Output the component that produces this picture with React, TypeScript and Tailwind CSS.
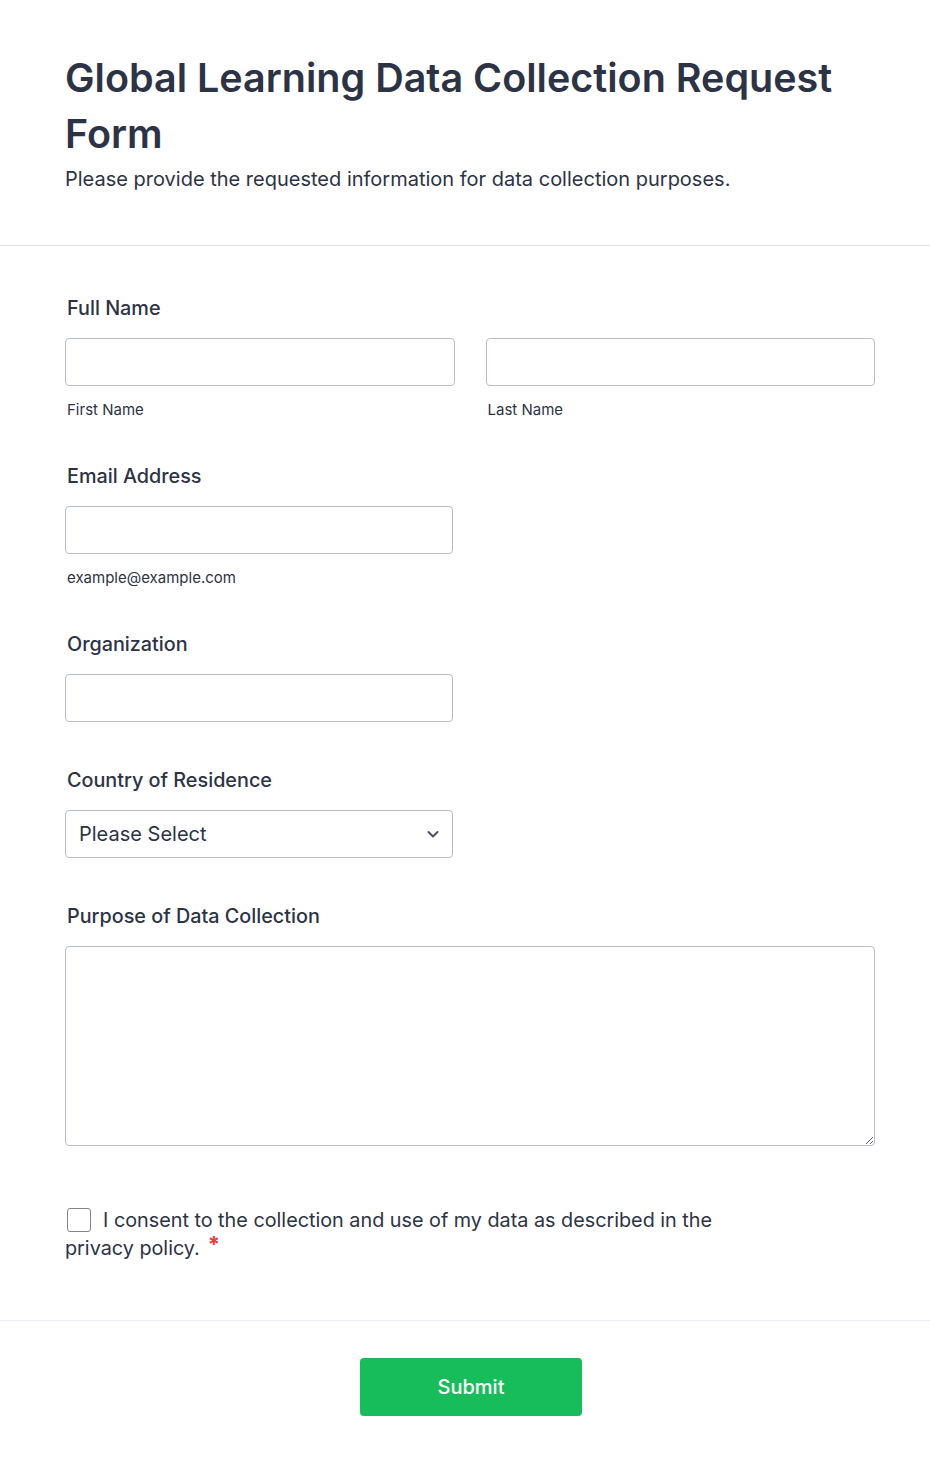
import React from "react";

function Label({ children }: { children: React.ReactNode }) {
  return (
    <div className="ml-[2px] text-[19.8px] font-medium leading-[30px] text-[#2c3345]">{children}</div>
  );
}

function Sub({ children }: { children: React.ReactNode }) {
  return <div className="ml-[2px] mt-[13px] text-[15px] leading-[22px] text-[#2c3345]">{children}</div>;
}

const inputCls =
  "block h-[48px] w-full rounded-[4px] border border-[#b8bdc9] bg-white outline-none";

export default function App() {
  return (
    <div className="min-h-[1467px] bg-white text-[#2c3345]" style={{ fontFamily: "Inter, 'Noto Sans', sans-serif" }}>
      <header className="border-b border-[#dcdee8] pl-[65px] pr-[55px] pb-[51px] pt-[50px]">
        <h1 className="text-[39.5px] font-semibold leading-[56px] text-[#2c3345]">
          Global Learning Data Collection Request Form
        </h1>
        <p className="mt-[2px] text-[20px] leading-[30px] text-[#2c3345]">
          Please provide the requested information for data collection purposes.
        </p>
      </header>

      <main className="pl-[65px] pr-[55px] pb-[58px] pt-[47px]">
        <section>
          <Label>Full Name</Label>
          <div className="mt-[15px] grid grid-cols-2 gap-[31px]">
            <div>
              <input className={inputCls} />
              <Sub>First Name</Sub>
            </div>
            <div>
              <input className={inputCls} />
              <Sub>Last Name</Sub>
            </div>
          </div>
        </section>

        <section className="mt-[40px]">
          <Label>Email Address</Label>
          <div className="mt-[15px] w-[388px]">
            <input className={inputCls} />
          </div>
          <Sub>example@example.com</Sub>
        </section>

        <section className="mt-[40px]">
          <Label>Organization</Label>
          <div className="mt-[15px] w-[388px]">
            <input className={inputCls} />
          </div>
        </section>

        <section className="mt-[43px]">
          <Label>Country of Residence</Label>
          <div className="mt-[15px] flex h-[48px] w-[388px] items-center justify-between rounded-[4px] border border-[#b8bdc9] pl-[13px] pr-[12px]">
            <span className="text-[20px] leading-[30px] text-[#2c3345]">Please Select</span>
            <svg width="14" height="14" viewBox="0 0 14 14" fill="none">
              <path d="M2.5 5 L7 9.5 L11.5 5" stroke="#4a5062" strokeWidth="2" strokeLinecap="round" strokeLinejoin="round" />
            </svg>
          </div>
        </section>

        <section className="mt-[43px]">
          <Label>Purpose of Data Collection</Label>
          <textarea className="mt-[15px] block h-[200px] w-full rounded-[4px] border border-[#b8bdc9] bg-white outline-none" />
        </section>

        <section className="mt-[60px] max-w-[690px] text-[19.8px] leading-[28px] text-[#2c3345]">
          <span className="ml-[2px] mr-[12px] inline-block h-[24px] w-[24px] rounded-[3px] border border-[#858585] bg-white align-[-5px]" />
          I consent to the collection and use of my data as described in the privacy policy.
          <span className="relative top-[-3px] ml-[8px] text-[22px] font-bold leading-[20px] text-[#f23a3c]">*</span>
        </section>
      </main>

      <footer className="border-t border-[#eceef5] pl-[67px] pr-[55px] pt-[37px] pb-[50px]">
        <div className="flex justify-center">
          <button className="h-[58px] w-[222px] rounded-[4px] bg-[#18bd5b] text-[20px] font-medium text-white">
            Submit
          </button>
        </div>
      </footer>
    </div>
  );
}
